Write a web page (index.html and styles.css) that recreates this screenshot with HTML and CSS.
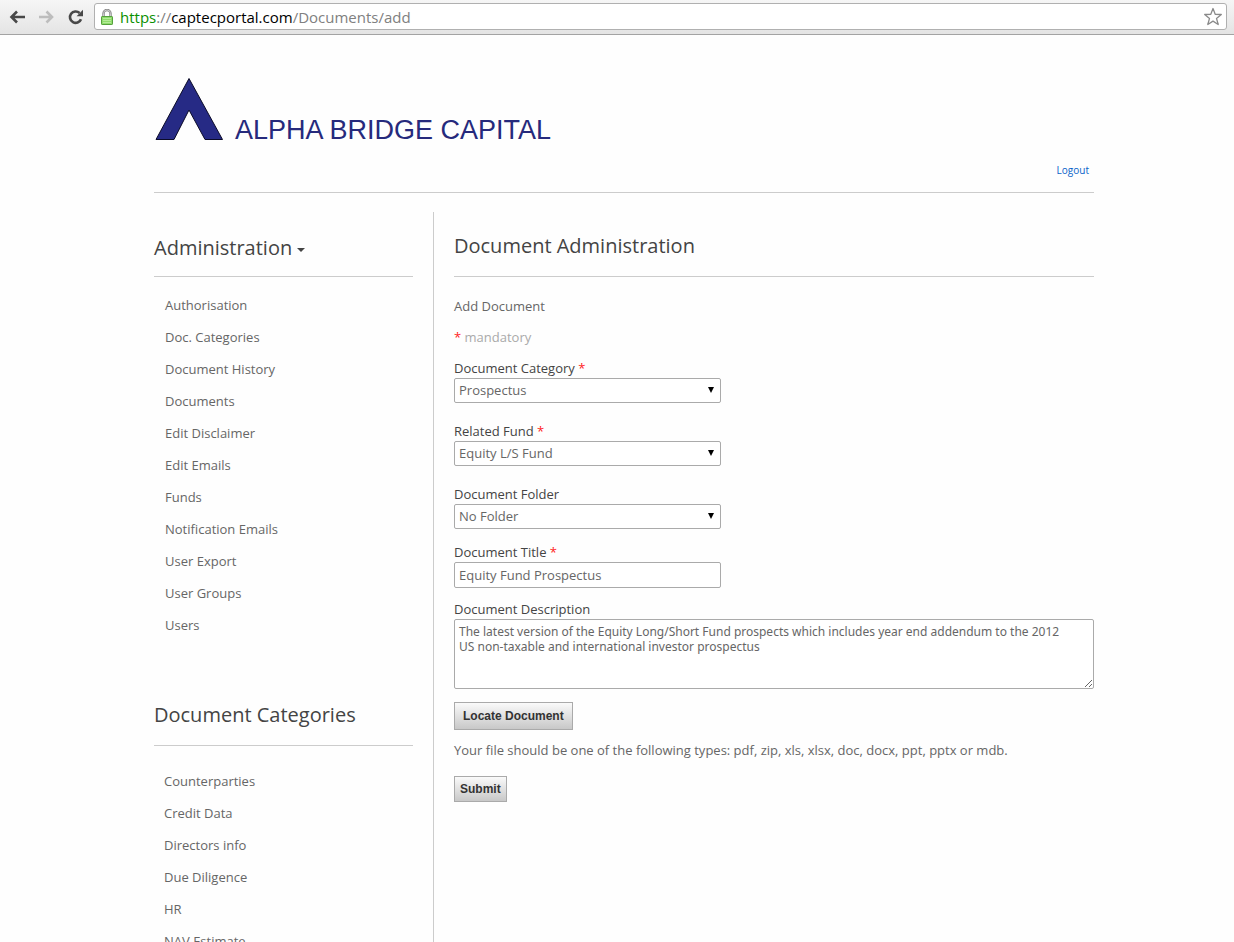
FILE: index.html
```html
<!DOCTYPE html>
<html lang="en">
<head>
<meta charset="utf-8">
<title>Document Administration</title>
<link rel="stylesheet" href="styles.css">
</head>
<body>
<header class="toolbar">
  <button class="tool" aria-label="Back">
    <svg width="18" height="16" viewBox="0 0 18 16"><path d="M17 8H4M9 2.500L3.500 8l5.500 5.500" fill="none" stroke="#484848" stroke-width="2.600"/></svg>
  </button>
  <button class="tool" aria-label="Forward">
    <svg width="18" height="16" viewBox="0 0 18 16"><path d="M2 8h12M9.500 2.500L15 8l-5.500 5.500" fill="none" stroke="#bdbdbd" stroke-width="2.600"/></svg>
  </button>
  <button class="tool" aria-label="Reload">
    <svg width="18" height="16" viewBox="0 0 18 16"><path d="M15 10.200A5.700 5.700 0 1 1 13.600 4" fill="none" stroke="#484848" stroke-width="2.600"/><path d="M17 .8v6.400H10.600z" fill="#484848"/></svg>
  </button>
  <div class="address">
    <svg class="lock" width="12" height="16" viewBox="0 0 12 16"><path d="M2.500 8V4.500a3.500 3.500 0 0 1 7 0V8" fill="none" stroke="#858585" stroke-width="2.400"/><path d="M2.500 8V4.500a3.500 3.500 0 0 1 7 0V8" fill="none" stroke="#dcdcdc" stroke-width=".8"/><rect x=".5" y="7.500" width="11" height="8" rx=".6" fill="#8fdc6c" stroke="#55a03c"/><path d="M2 9.500h8M2 11.500h8M2 13.500h8" stroke="#b4eb98"/></svg>
    <div class="url"><span class="scheme">https</span>://<span class="host">captecportal.com</span>/Documents/add</div>
    <button class="star" aria-label="Bookmark this page">
      <svg width="20" height="19" viewBox="0 0 20 19"><path d="M10 1.500l2.200 5.800 6.100.2-4.800 3.900 1.700 6.100L10 14.100l-5.200 3.400 1.700-6.100L1.700 7.500l6.100-.2z" fill="#fff" stroke="#8a8a8a" stroke-width="1.300" stroke-linejoin="round"/></svg>
    </button>
  </div>
</header>
<div class="page">
  <div class="brand">
    <svg width="70" height="64" viewBox="0 0 70 64"><path d="M35 1.500L68.500 62.500H51L35 33 20 62.500H2z" fill="#262a85" stroke="#0b0b28"/></svg>
    <span class="brand-name">ALPHA BRIDGE CAPITAL</span>
  </div>
  <div class="account"><a href="#">Logout</a></div>
  <div class="columns">
    <nav class="sidebar">
      <h2 class="title">Administration <span class="caret"></span></h2>
      <ul class="menu">
        <li><a href="#">Authorisation</a></li>
        <li><a href="#">Doc. Categories</a></li>
        <li><a href="#">Document History</a></li>
        <li><a href="#">Documents</a></li>
        <li><a href="#">Edit Disclaimer</a></li>
        <li><a href="#">Edit Emails</a></li>
        <li><a href="#">Funds</a></li>
        <li><a href="#">Notification Emails</a></li>
        <li><a href="#">User Export</a></li>
        <li><a href="#">User Groups</a></li>
        <li><a href="#">Users</a></li>
      </ul>
      <h2 class="title title-second">Document Categories</h2>
      <ul class="menu menu-second">
        <li><a href="#">Counterparties</a></li>
        <li><a href="#">Credit Data</a></li>
        <li><a href="#">Directors info</a></li>
        <li><a href="#">Due Diligence</a></li>
        <li><a href="#">HR</a></li>
        <li><a href="#">NAV Estimate</a></li>
      </ul>
    </nav>
    <main class="main">
      <h1 class="title title-main">Document Administration</h1>
      <form class="form">
        <p class="lead">Add Document</p>
        <p class="note"><span class="req">*</span> mandatory</p>
        <div class="field">
          <label for="category">Document Category <span class="req">*</span></label>
          <div class="select"><select id="category"><option>Prospectus</option></select></div>
        </div>
        <div class="field">
          <label for="fund">Related Fund <span class="req">*</span></label>
          <div class="select"><select id="fund"><option>Equity L/S Fund</option></select></div>
        </div>
        <div class="field field-folder">
          <label for="folder">Document Folder</label>
          <div class="select"><select id="folder"><option>No Folder</option></select></div>
        </div>
        <div class="field field-title">
          <label for="title">Document Title <span class="req">*</span></label>
          <input id="title" type="text" value="Equity Fund Prospectus">
        </div>
        <div class="field field-text">
          <label for="description">Document Description</label>
          <textarea id="description">The latest version of the Equity Long/Short Fund prospects which includes year end addendum to the 2012 US non-taxable and international investor prospectus</textarea>
        </div>
        <button class="button locate" type="button">Locate Document</button>
        <p class="hint">Your file should be one of the following types: pdf, zip, xls, xlsx, doc, docx, ppt, pptx or mdb.</p>
        <button class="button" type="submit">Submit</button>
      </form>
    </main>
  </div>
</div>
</body>
</html>
```
FILE: styles.css
```css
* { box-sizing: border-box; }

body {
  margin: 0;
  height: 100vh;
  display: flex;
  flex-direction: column;
  background: #fefefe;
  color: #666;
  font: 13px/20px "Open Sans", "Noto Sans", sans-serif;
}

h1, h2, p, ul { margin: 0; padding: 0; font-weight: normal; }
button { font: inherit; }

.toolbar {
  flex: none;
  display: flex;
  align-items: center;
  height: 35px;
  padding: 0 7px 1px 8px;
  border-bottom: 1px solid #a3a3a3;
  background: linear-gradient(#f6f6f6, #e4e4e4);
}
.tool, .star {
  display: flex;
  padding: 0;
  border: 0;
  background: none;
}
.tool { margin-right: 11px; }
.tool:nth-child(3) { margin-right: 10px; }
.address {
  flex: 1;
  display: flex;
  align-items: center;
  height: 27px;
  padding: 0 3px 0 6px;
  border: 1px solid #b0b0b0;
  border-radius: 3px;
  background: #fff;
}
.url {
  flex: 1;
  margin-left: 7px;
  color: #808080;
  font: 15px/24px "Open Sans", sans-serif;
}
.scheme { color: #0a9000; }
.host { color: #000; }

.page {
  flex: 1;
  min-height: 0;
  overflow-y: auto;
  scrollbar-width: none;
  width: 100%;
  max-width: 954px;
  margin: 0 auto;
  padding: 42px 0 0 14px;
}
.brand {
  display: flex;
  align-items: flex-end;
  gap: 11px;
  height: 64px;
}
.brand-name {
  color: #262a7c;
  font: 27px/22px "Liberation Sans", Arial, sans-serif;
}
.account {
  height: 52px;
  padding: 19px 5px 0 0;
  border-bottom: 1px solid #ccc;
  text-align: right;
  font-size: 10px;
}
.account a { color: #0a63c9; text-decoration: none; }

.columns {
  display: flex;
  margin-top: 19px;
}
.sidebar {
  flex: none;
  width: 280px;
  padding-right: 20px;
  border-right: 1px solid #ccc;
}
.main { flex: 1; padding-left: 20px; }

.title {
  height: 65px;
  padding-top: 21px;
  border-bottom: 1px solid #ccc;
  color: #444;
  font: 20px/30px "Open Sans", sans-serif;
}
.title-main { padding-top: 19px; }
.title-second { margin-top: 40px; padding-top: 19px; }
.caret {
  display: inline-block;
  vertical-align: middle;
  border: 4px solid transparent;
  border-top-color: #444;
  border-bottom: 0;
}
.menu { padding: 12px 0 0 11px; list-style: none; }
.menu-second { padding: 19px 0 0 10px; }
.menu a {
  display: block;
  color: #666;
  line-height: 32px;
  text-decoration: none;
}

.form { padding-top: 19px; }
.note { margin: 11px 0; color: #aaa; }
.req { color: #f22; }
.field { margin-bottom: 18px; color: #444; }
.field-folder { margin-bottom: 13px; }
.field-title { margin-bottom: 11px; }
.field-text { margin-bottom: 13px; }
.field label { display: block; }
.select { position: relative; width: 267px; }
.select::after {
  content: "";
  position: absolute;
  top: 9px;
  right: 7px;
  border: 3px solid transparent;
  border-top: 6px solid #000;
  border-bottom: 0;
  pointer-events: none;
}
select, input, textarea {
  display: block;
  width: 267px;
  height: 25px;
  margin: 0;
  padding: 0 4px;
  border: 1px solid #aaa;
  border-radius: 2px;
  background: #fff;
  color: #666;
  font: inherit;
}
select { appearance: none; padding-bottom: 2px; }
input { height: 26px; }
textarea {
  width: 100%;
  height: 70px;
  padding: 4px 20px 4px 4px;
  font: 12px/15px "Noto Sans", "Open Sans", sans-serif;
  resize: both;
}
.button {
  display: block;
  height: 26px;
  padding: 0 5px;
  border: 1px solid #aaa;
  background: linear-gradient(#fafafa, #c8c8c8);
  color: #333;
  font: bold 12px/24px "Liberation Sans", Arial, sans-serif;
}
.locate { height: 28px; padding: 0 8px; }
.hint { margin: 10px 0 16px; }
```
